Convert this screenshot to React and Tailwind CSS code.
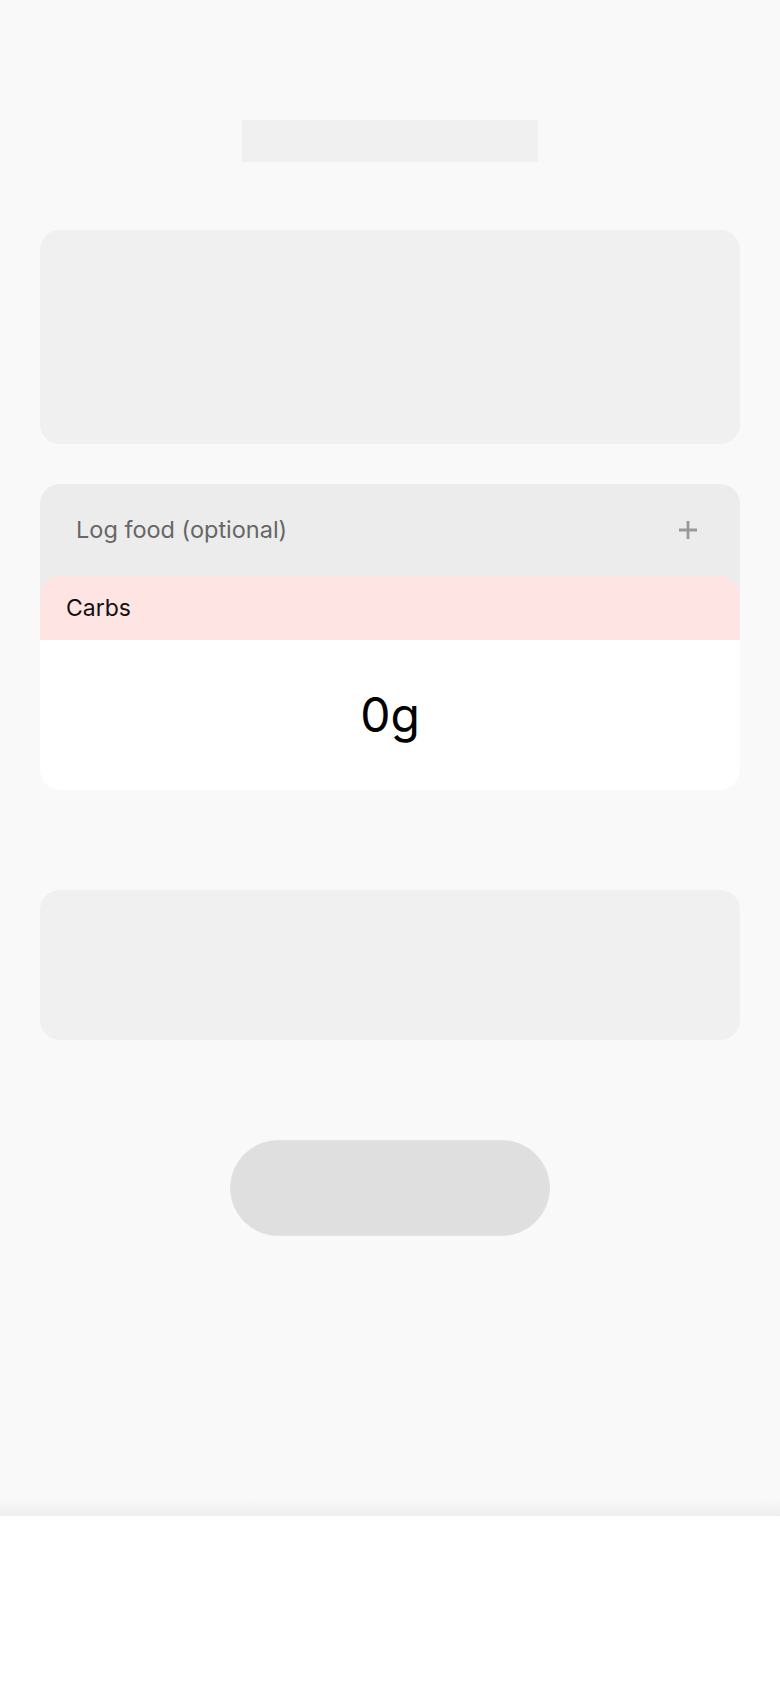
// App.jsx
import { useState } from "react";

const PlusIcon = () => (
  <svg width="20" height="20" viewBox="0 0 20 20" fill="none" aria-hidden="true">
    <path d="M10 1v18M1 10h18" stroke="#999999" strokeWidth="2.8" strokeLinecap="butt" />
  </svg>
);

export default function App() {
  const [carbs] = useState(0);

  return (
    <div className="min-h-[1688px] bg-white" style={{ fontFamily: "Inter, 'Noto Sans', sans-serif" }}>
      <div className="bg-[#f9f9f9] h-[1498px] flex flex-col items-center pt-[120px]">
        {/* title placeholder */}
        <div className="w-[296px] h-[42px] bg-[#f0f0f0]" />

        {/* summary card */}
        <div className="mt-[68px] w-[700px] h-[214px] rounded-[20px] bg-[#f0f0f0]" />

        {/* log food card */}
        <div className="mt-[40px] w-[700px] rounded-[20px] bg-[#ececec] overflow-hidden">
          <button
            type="button"
            className="w-full h-[92px] flex items-center justify-between pl-[36px] pr-[42px]"
          >
            <span className="text-[23.5px] text-[#666666]">Log food (optional)</span>
            <PlusIcon />
          </button>
          <div className="h-[64px] rounded-t-[20px] bg-[#ffe4e4] flex items-center pl-[26px]">
            <span className="text-[23px] text-[#111111]">Carbs</span>
          </div>
          <div className="h-[150px] bg-white flex items-center justify-center">
            <span className="text-[48px] text-black leading-none">{carbs}g</span>
          </div>
        </div>

        {/* notes card */}
        <div className="mt-[100px] w-[700px] h-[150px] rounded-[20px] bg-[#f0f0f0]" />

        {/* action button */}
        <button
          type="button"
          className="mt-[100px] w-[320px] h-[96px] rounded-full bg-[#dfdfdf] border border-[#e3e3e3]"
        />
      </div>
      <div className="h-[18px] bg-linear-to-b from-[#f9f9f9] to-[#eeeeee]" />
    </div>
  );
}
